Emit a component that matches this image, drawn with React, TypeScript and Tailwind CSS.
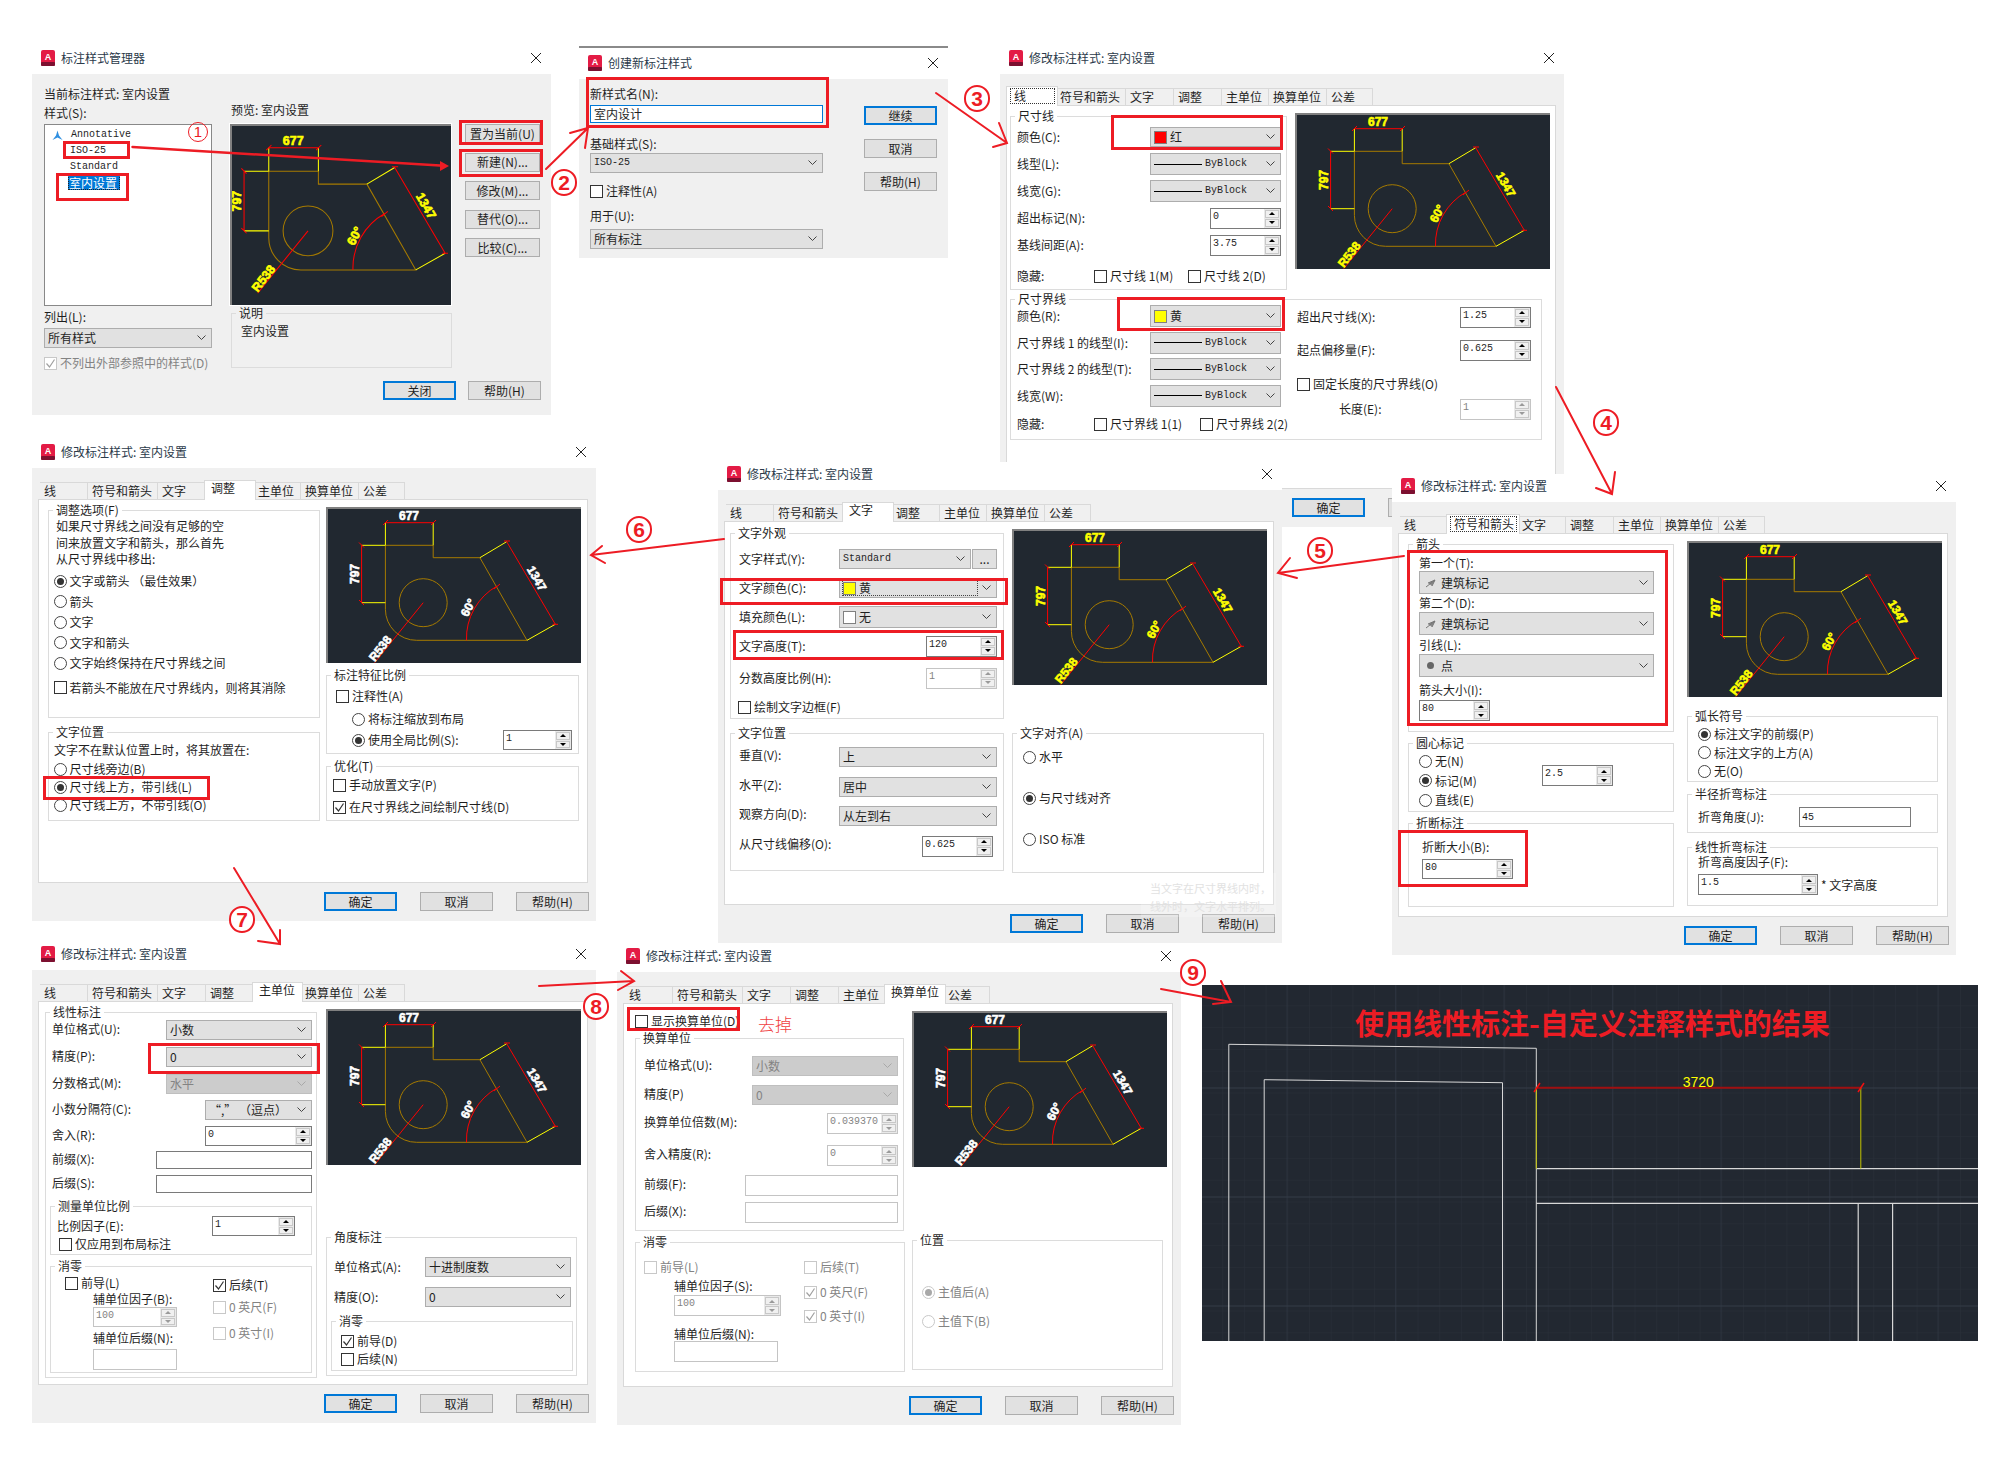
import { ReactNode } from "react";
import clsx from "clsx";

const TABS = [
  { name: "线", w: "w-[48px]", on: "w-[52px]" },
  { name: "符号和箭头", w: "w-[70px]", on: "w-[74px]" },
  { name: "文字", w: "w-[48px]", on: "w-[52px]" },
  { name: "调整", w: "w-[48px]", on: "w-[52px]" },
  { name: "主单位", w: "w-[47px]", on: "w-[51px]" },
  { name: "换算单位", w: "w-[58px]", on: "w-[62px]" },
  { name: "公差", w: "w-[46px]", on: "w-[50px]" },
];

const mono = "[font-family:'Liberation_Mono','Noto_Sans_CJK_SC',monospace] text-[10px]";

function Chevron({ disabled }: { disabled?: boolean }) {
  return (
    <svg width="9" height="6" viewBox="0 0 9 6" className="shrink-0">
      <polyline points="0.5,0.5 4.5,4.5 8.5,0.5" fill="none" stroke={disabled ? "#a8a8a8" : "#444"} strokeWidth="1" />
    </svg>
  );
}

function Combo({ className, disabled, children }: { className?: string; disabled?: boolean; children?: ReactNode }) {
  return (
    <div
      className={clsx(
        "flex items-center pl-[3px] pr-[5px] border shrink-0",
        disabled ? "bg-[#cccccc] border-[#bfbfbf] text-[#838383]" : "bg-[#e1e1e1] border-[#adadad]",
        className
      )}
    >
      <div className="flex-1 flex items-center gap-[3px] min-w-0">{children}</div>
      <Chevron disabled={disabled} />
    </div>
  );
}

function ByBlock() {
  return (
    <>
      <span className="w-[48px] h-px bg-black" />
      <span className={mono}>ByBlock</span>
    </>
  );
}

function Swatch({ color }: { color: string }) {
  return <span className={clsx("w-[13px] h-[13px] border border-[#808080]", color)} />;
}

function Spin({ className, value, disabled }: { className?: string; value: string; disabled?: boolean }) {
  const arrow = disabled ? "#9a9a9a" : "#000";
  return (
    <div className={clsx("flex border shrink-0 bg-white", disabled ? "border-[#c4c4c4] text-[#838383]" : "border-[#7a7a7a]", className)}>
      <span className={clsx(mono, "flex-1 pl-[2px] pt-[1px] whitespace-nowrap")}>{value}</span>
      <div className="w-[16px] flex flex-col gap-[1px] p-[1px] bg-[#e9e9e9]">
        <span className="flex-1 flex items-center justify-center bg-[#f0f0f0] border border-[#c8c8c8]">
          <svg width="6" height="3" viewBox="0 0 6 3"><polygon points="3,0 6,3 0,3" fill={arrow} /></svg>
        </span>
        <span className="flex-1 flex items-center justify-center bg-[#f0f0f0] border border-[#c8c8c8]">
          <svg width="6" height="3" viewBox="0 0 6 3"><polygon points="0,0 6,0 3,3" fill={arrow} /></svg>
        </span>
      </div>
    </div>
  );
}

function Input({ className, value, disabled }: { className?: string; value?: string; disabled?: boolean }) {
  return (
    <div className={clsx("border bg-white pl-[2px] shrink-0", disabled ? "border-[#c4c4c4]" : "border-[#7a7a7a]", className)}>
      <span className={mono}>{value}</span>
    </div>
  );
}

function Check({ label, on, disabled, className }: { label: string; on?: boolean; disabled?: boolean; className?: string }) {
  return (
    <div className={clsx("flex items-center gap-[3px] h-[14px] whitespace-nowrap shrink-0", disabled && "text-[#838383]", className)}>
      <span className={clsx("w-[13px] h-[13px] border bg-white flex items-center justify-center shrink-0", disabled ? "border-[#c8c8c8]" : "border-[#333333]")}>
        {on && (
          <svg width="11" height="11" viewBox="0 0 11 11">
            <polyline points="1.5,5.5 4.5,9 9.5,1.5" fill="none" stroke={disabled ? "#a0a0a0" : "#333"} strokeWidth="1.2" />
          </svg>
        )}
      </span>
      {label}
    </div>
  );
}

function Radio({ label, on, disabled, className }: { label: string; on?: boolean; disabled?: boolean; className?: string }) {
  return (
    <div className={clsx("flex items-center gap-[3px] h-[14px] whitespace-nowrap", disabled && "text-[#838383]", className)}>
      <span className={clsx("w-[13px] h-[13px] rounded-full border bg-white flex items-center justify-center shrink-0", disabled ? "border-[#c8c8c8]" : "border-[#444444]")}>
        {on && <span className={clsx("w-[7px] h-[7px] rounded-full", disabled ? "bg-[#a8a8a8]" : "bg-[#333333]")} />}
      </span>
      {label}
    </div>
  );
}

function Btn({ children, primary, className }: { children: ReactNode; primary?: boolean; className?: string }) {
  return (
    <div
      className={clsx(
        "h-[19px] bg-[#e1e1e1] flex items-center justify-center shrink-0",
        primary ? "border-2 border-[#0078d7]" : "border border-[#adadad]",
        className
      )}
    >
      {children}
    </div>
  );
}

function Group({ legend, className, children }: { legend: string; className?: string; children?: ReactNode }) {
  return (
    <fieldset className={clsx("border border-[#dcdcdc] min-w-0 shrink-0", className)}>
      <legend className="ml-[4px] px-[3px] text-[12px] leading-[14px]">{legend}</legend>
      {children}
    </fieldset>
  );
}

function Field({ label, className, children }: { label: string; className?: string; children?: ReactNode }) {
  return (
    <div className={clsx("flex items-center justify-between whitespace-nowrap", className)}>
      <span>{label}</span>
      {children}
    </div>
  );
}

function Preview({ white, big, className }: { white?: boolean; big?: boolean; className?: string }) {
  const ink = white ? "#ffffff" : "#ffff00";
  const brown = "#a57a00";
  return (
    <div className={clsx("shrink-0 bg-[#212830] border-t-2 border-l-2 border-[#808080] outline outline-1 outline-white", big ? "w-[221px] h-[181px]" : "w-[255px] h-[156px]", className)}>
      <svg className="w-full h-full" viewBox={big ? "22.2 -7.3 210.5 172.4" : "0 0 253 154"} fontFamily="Liberation Sans, sans-serif" fontWeight="bold" fontSize="12">
        <g fill="none" stroke={brown} strokeWidth="1">
          <path d="M57.4 36.3H105.2V48.7H151.9L199 131.3H88.7A31 31 0 0 1 57.4 100.3Z" />
          <circle cx="95.2" cy="93.7" r="24" />
        </g>
        <g fill="none" stroke="#ffff00" strokeWidth="1">
          <path d="M57.4 13.7V36.3M105.2 13.7V36.3M33.6 36.3H57.4M33.6 93.7H57.4M151.9 48.7L178.7 32.7M199 131.3L227.3 115.3" />
        </g>
        <g fill="none" stroke="#ff0000" strokeWidth="1">
          <path d="M55 16L60 11M103 16L108 11M57.4 13.7H105.2" />
          <path d="M33.6 36.3V93.7M31 33.5L36 38.5M31 91L36 96" />
          <path d="M178.7 32.7L227.3 115.3M176 32H182M224.5 115.3H230" />
          <path d="M95.2 93.7L46.7 153.7" />
          <path d="M169.1 77A60 60 0 0 0 138.5 131.3M166 80L172 75" />
        </g>
        <g fill={ink} stroke={ink} strokeWidth="0.6" textAnchor="middle">
          <text x="81" y="11">677</text>
          <text x="27.5" y="65" transform="rotate(-90 27.5 65)" dominantBaseline="middle">797</text>
          <text x="208" y="70" transform="rotate(60 208 70)" dominantBaseline="middle">1347</text>
          <text x="141" y="99" transform="rotate(-62 141 99)" dominantBaseline="middle">60°</text>
          <text x="53" y="140" transform="rotate(-52 53 140)" dominantBaseline="middle">R538</text>
        </g>
      </svg>
    </div>
  );
}

function TitleBar({ title, className }: { title: string; className?: string }) {
  return (
    <div className={clsx("flex items-center justify-between pl-[9px] pr-[9px] pb-[4px]", className)}>
      <div className="flex items-center gap-[6px]">
        <svg width="14" height="16" viewBox="0 0 14 16">
          <rect width="14" height="16" rx="2" fill="#e31b45" />
          <rect y="12" width="14" height="4" rx="1" fill="#7c1030" />
          <text x="7" y="10" textAnchor="middle" fontSize="9" fontWeight="bold" fill="#fff" fontFamily="Liberation Sans, sans-serif">A</text>
        </svg>
        <span className="text-[#2b3a4a]">{title}</span>
      </div>
      <svg width="12" height="12" viewBox="0 0 12 12">
        <path d="M1 1L11 11M11 1L1 11" stroke="#222" strokeWidth="1" />
      </svg>
    </div>
  );
}

function TabWin({ className, active, focus, panelClass, children }: { className: string; active: string; focus?: boolean; panelClass?: string; children: ReactNode }) {
  return (
    <section className={clsx("absolute w-[564px] bg-white", className)}>
      <TitleBar title="修改标注样式: 室内设置" className="h-[28px]" />
      <div className="h-[453px] bg-[#f0f0f0] pt-[14px] pl-[6px]">
        <div className="flex pl-[2px] h-[17px]">
          {TABS.map((t) => (
            <div
              key={t.name}
              className={clsx(
                "shrink-0 border-t border-r border-[#d9d9d9] pl-[4px] whitespace-nowrap",
                t.name === active
                  ? clsx(t.on, "relative z-10 -mx-[2px] -mt-[2px] h-[20px] bg-white border-l pl-[6px]")
                  : clsx(t.w, "bg-[#f0f0f0] leading-[16px]")
              )}
            >
              {t.name === active && focus ? (
                <span className="block border border-dotted border-[#333333] leading-[14px] mt-[1px] -ml-[3px] mr-[2px] pl-[3px]">{t.name}</span>
              ) : (
                t.name
              )}
            </div>
          ))}
        </div>
        <div className={clsx("w-[550px] h-[384px] bg-white border border-[#d9d9d9]", panelClass)}>{children}</div>
        <div className="flex justify-end gap-[23px] pr-[7px] mt-[9px]">
          <Btn primary className="w-[73px]">确定</Btn>
          <Btn className="w-[73px]">取消</Btn>
          <Btn className="w-[73px]">帮助(H)</Btn>
        </div>
      </div>
    </section>
  );
}

function ManagerWin() {
  return (
    <section className="absolute left-[32px] top-[46px] w-[519px] bg-white">
      <TitleBar title="标注样式管理器" className="h-[28px]" />
      <div className="h-[341px] bg-[#f0f0f0] flex flex-col">
        <div className="flex pl-[12px] h-[296px]">
          <div className="w-[168px] pt-[13px]">
            <div className="h-[14px] whitespace-nowrap">当前标注样式: 室内设置</div>
            <div className="h-[14px] mt-[5px]">样式(S):</div>
            <div className="h-[182px] mt-[4px] bg-white border border-[#888888] pt-[2px]">
              <div className="h-[16px] flex items-center gap-[8px] pl-[7px]">
                <svg width="11" height="11" viewBox="0 0 11 11">
                  <path d="M5.5 0.5L7 5.5L10.5 10L5.5 7.5L0.5 10L4 5.5Z" fill="#2f8fe0" />
                </svg>
                <span className={mono}>Annotative</span>
              </div>
              <div className={clsx(mono, "h-[16px] leading-[16px] pl-[25px]")}>ISO-25</div>
              <div className={clsx(mono, "h-[16px] leading-[16px] pl-[25px]")}>Standard</div>
              <div className="ml-[23px] -mt-[1px] w-[52px] h-[16px] leading-[15px] bg-[#0078d7] text-white border border-dotted border-[#222222] whitespace-nowrap">室内设置</div>
            </div>
            <div className="h-[14px] mt-[4px]">列出(L):</div>
            <Combo className="w-[168px] h-[20px] mt-[4px]">所有样式</Combo>
            <Check disabled on label="不列出外部参照中的样式(D)" className="mt-[8px]" />
          </div>
          <div className="w-[221px] ml-[19px] pt-[29px]">
            <div className="h-[14px]">预览: 室内设置</div>
            <Preview big white={false} className="mt-[7px] -ml-[1px]" />
            <Group legend="说明" className="w-[221px] h-[62px] mt-[1px]">
              <div className="pl-[9px] pt-[4px]">室内设置</div>
            </Group>
          </div>
          <div className="w-[75px] ml-[13px] pt-[50px] flex flex-col gap-[9.5px]">
            <Btn>置为当前(U)</Btn>
            <Btn>新建(N)...</Btn>
            <Btn>修改(M)...</Btn>
            <Btn>替代(O)...</Btn>
            <Btn>比较(C)...</Btn>
          </div>
        </div>
        <div className="flex justify-end gap-[12px] pr-[10px] mt-[11px]">
          <Btn primary className="w-[73px]">关闭</Btn>
          <Btn className="w-[73px]">帮助(H)</Btn>
        </div>
      </div>
    </section>
  );
}

function CreateWin() {
  return (
    <section className="absolute left-[579px] top-[46px] w-[369px] bg-white border-t-2 border-[#8a8a8a]">
      <TitleBar title="创建新标注样式" className="h-[31px] pt-[3px]" />
      <div className="h-[179px] bg-[#f0f0f0] flex pl-[11px]">
        <div className="w-[233px] pt-[8px]">
          <div className="h-[14px]">新样式名(N):</div>
          <div className="h-[18px] mt-[4px] bg-white border border-[#0078d7] pl-[3px] leading-[16px]">室内设计</div>
          <div className="h-[14px] mt-[14px]">基础样式(S):</div>
          <Combo className="w-[233px] h-[20px] mt-[2px]"><span className={mono}>ISO-25</span></Combo>
          <Check label="注释性(A)" className="mt-[11px]" />
          <div className="h-[14px] mt-[11px]">用于(U):</div>
          <Combo className="w-[233px] h-[20px] mt-[6px]">所有标注</Combo>
        </div>
        <div className="ml-[41px] pt-[27px] flex flex-col gap-[14px]">
          <Btn primary className="w-[73px]">继续</Btn>
          <Btn className="w-[73px]">取消</Btn>
          <Btn className="w-[73px]">帮助(H)</Btn>
        </div>
      </div>
    </section>
  );
}

function LinesWin() {
  return (
    <TabWin className="left-[1000px] top-[46px]" active="线" focus panelClass="pl-[3px] pt-[3px]">
      <div className="flex gap-[8px]">
        <Group legend="尺寸线" className="w-[277px] h-[181px]">
          <div className="flex flex-col gap-[5px] pl-[6px] pr-[5px] pt-[3px]">
            <Field label="颜色(C):" className="h-[22px]">
              <Combo className="w-[131px] h-[20px]"><Swatch color="bg-[#ff0000]" />红</Combo>
            </Field>
            <Field label="线型(L):" className="h-[22px]"><Combo className="w-[131px] h-[22px]"><ByBlock /></Combo></Field>
            <Field label="线宽(G):" className="h-[22px]"><Combo className="w-[131px] h-[22px]"><ByBlock /></Combo></Field>
            <Field label="超出标记(N):" className="h-[22px]"><Spin className="w-[71px] h-[21px]" value="0" /></Field>
            <Field label="基线间距(A):" className="h-[22px]"><Spin className="w-[71px] h-[21px]" value="3.75" /></Field>
            <div className="flex items-center h-[22px] mt-[4px]">
              <span className="w-[77px] shrink-0">隐藏:</span>
              <Check label="尺寸线 1(M)" className="w-[94px]" />
              <Check label="尺寸线 2(D)" />
            </div>
          </div>
        </Group>
        <Preview className="mt-[4px]" />
      </div>
      <Group legend="尺寸界线" className="w-[532px] h-[148px] mt-[2px]">
        <div className="flex pl-[6px] -mt-[1px]">
          <div className="w-[264px] flex flex-col gap-[4.5px]">
            <Field label="颜色(R):" className="h-[22px]">
              <Combo className="w-[131px] h-[22px]"><Swatch color="bg-[#ffff00]" />黄</Combo>
            </Field>
            <Field label="尺寸界线 1 的线型(I):" className="h-[22px]"><Combo className="w-[131px] h-[22px]"><ByBlock /></Combo></Field>
            <Field label="尺寸界线 2 的线型(T):" className="h-[22px]"><Combo className="w-[131px] h-[22px]"><ByBlock /></Combo></Field>
            <Field label="线宽(W):" className="h-[22px]"><Combo className="w-[131px] h-[22px]"><ByBlock /></Combo></Field>
            <div className="flex items-center h-[22px] mt-[2px]">
              <span className="w-[77px] shrink-0">隐藏:</span>
              <Check label="尺寸界线 1(1)" className="w-[106px]" />
              <Check label="尺寸界线 2(2)" />
            </div>
          </div>
          <div className="w-[234px] ml-[16px] pt-[1px]">
            <Field label="超出尺寸线(X):" className="h-[22px]"><Spin className="w-[71px] h-[21px]" value="1.25" /></Field>
            <Field label="起点偏移量(F):" className="h-[22px] mt-[11px]"><Spin className="w-[71px] h-[21px]" value="0.625" /></Field>
            <Check label="固定长度的尺寸界线(O)" className="mt-[16px]" />
            <Field label="长度(E):" className="h-[22px] mt-[7px] pl-[42px]"><Spin disabled className="w-[71px] h-[21px]" value="1" /></Field>
          </div>
        </div>
      </Group>
    </TabWin>
  );
}

function FitWin() {
  return (
    <TabWin className="left-[32px] top-[440px]" active="调整" panelClass="flex pl-[9px] pt-[3px] gap-[6px]">
      <div className="w-[272px] flex flex-col gap-[7px]">
        <Group legend="调整选项(F)" className="h-[215px]">
          <div className="pl-[7px] pt-[1px] leading-[16.5px]">
            如果尺寸界线之间没有足够的空<br />间来放置文字和箭头，那么首先<br />从尺寸界线中移出:
          </div>
          <div className="pl-[4.5px] pt-[6.5px] flex flex-col gap-[6.5px]">
            <Radio on label="文字或箭头 （最佳效果）" />
            <Radio label="箭头" />
            <Radio label="文字" />
            <Radio label="文字和箭头" />
            <Radio label="文字始终保持在尺寸界线之间" />
            <Check label="若箭头不能放在尺寸界线内，则将其消除" className="mt-[4px]" />
          </div>
        </Group>
        <Group legend="文字位置" className="h-[96px]">
          <div className="pl-[5px] pt-[4px]">文字不在默认位置上时，将其放置在:</div>
          <div className="pl-[4.5px] pt-[5px] flex flex-col gap-[4px]">
            <Radio label="尺寸线旁边(B)" />
            <Radio on label="尺寸线上方，带引线(L)" />
            <Radio label="尺寸线上方，不带引线(O)" />
          </div>
        </Group>
      </div>
      <div className="w-[255px] pt-[4px]">
        <Preview white />
        <Group legend="标注特征比例" className="w-[253px] h-[86px] mt-[5px]">
          <div className="pl-[9px] pt-[7px]"><Check label="注释性(A)" /></div>
          <div className="pl-[25px] pt-[9px]"><Radio label="将标注缩放到布局" /></div>
          <div className="pl-[25px] pr-[6px] pt-[4px] flex items-center justify-between h-[24px]">
            <Radio on label="使用全局比例(S):" />
            <Spin className="w-[69px] h-[20px]" value="1" />
          </div>
        </Group>
        <Group legend="优化(T)" className="w-[253px] h-[62px] mt-[5px]">
          <div className="pl-[6px] pt-[5px] flex flex-col gap-[8px]">
            <Check label="手动放置文字(P)" />
            <Check on label="在尺寸界线之间绘制尺寸线(D)" />
          </div>
        </Group>
      </div>
    </TabWin>
  );
}

function TextWin() {
  return (
    <TabWin className="left-[718px] top-[462px]" active="文字" panelClass="flex pl-[5px] pt-[4px] gap-[8px]">
      <div className="w-[274px] flex flex-col gap-[7px]">
        <Group legend="文字外观" className="h-[193px]">
          <div className="pl-[8px] pr-[6px] pt-[8px]">
            <Field label="文字样式(Y):" className="h-[22px]">
              <div className="flex gap-[1px]">
                <Combo className="w-[132px] h-[20px]"><span className={mono}>Standard</span></Combo>
                <Btn className="w-[25px] h-[20px]">...</Btn>
              </div>
            </Field>
            <Field label="文字颜色(C):" className="h-[22px] mt-[7px]">
              <Combo className="w-[158px] h-[20px]">
                <span className="flex-1 flex items-center gap-[3px] border border-dotted border-[#444444] h-[16px] -ml-[1px] mr-[4px]"><Swatch color="bg-[#ffff00]" />黄</span>
              </Combo>
            </Field>
            <Field label="填充颜色(L):" className="h-[22px] mt-[7px]">
              <Combo className="w-[158px] h-[22px]"><Swatch color="bg-white" />无</Combo>
            </Field>
            <Field label="文字高度(T):" className="h-[22px] mt-[7px]"><Spin className="w-[71px] h-[21px]" value="120" /></Field>
            <Field label="分数高度比例(H):" className="h-[22px] mt-[10px]"><Spin disabled className="w-[71px] h-[21px]" value="1" /></Field>
            <Check label="绘制文字边框(F)" className="mt-[11px] -ml-[1px]" />
          </div>
        </Group>
        <Group legend="文字位置" className="h-[145px]">
          <div className="pl-[8px] pr-[6px] pt-[6px] [&>div>span:first-child]:-mt-[5px]">
            <Field label="垂直(V):" className="h-[22px]"><Combo className="w-[158px] h-[20px]">上</Combo></Field>
            <Field label="水平(Z):" className="h-[22px] mt-[8px]"><Combo className="w-[158px] h-[20px]">居中</Combo></Field>
            <Field label="观察方向(D):" className="h-[22px] mt-[7px]"><Combo className="w-[158px] h-[20px]">从左到右</Combo></Field>
            <Field label="从尺寸线偏移(O):" className="h-[22px] mt-[8px] pr-[4px]"><Spin className="w-[71px] h-[21px]" value="0.625" /></Field>
          </div>
        </Group>
      </div>
      <div className="w-[255px] pt-[3px]">
        <Preview />
        <Group legend="文字对齐(A)" className="w-[252px] h-[147px] mt-[41px]">
          <div className="pl-[10px] pt-[10px] flex flex-col gap-[27px]">
            <Radio label="水平" />
            <Radio on label="与尺寸线对齐" />
            <Radio label="ISO 标准" />
          </div>
        </Group>
      </div>
    </TabWin>
  );
}

function ArrowsWin() {
  const tick = (
    <svg width="11" height="11" viewBox="0 0 11 11"><path d="M1 10L10 3M3 6L10 3L7 9" fill="#8a8a8a" stroke="#777" /></svg>
  );
  return (
    <TabWin className="left-[1392px] top-[474px]" active="符号和箭头" focus panelClass="flex pl-[9px] pt-[3px] gap-[13px]">
      <div className="w-[266px] flex flex-col gap-[4px]">
        <Group legend="箭头" className="h-[195px]">
          <div className="pl-[10px]">
            <div className="h-[14px] mt-[5px]">第一个(T):</div>
            <Combo className="w-[235px] h-[23px] mt-[1px] pl-[5px]">{tick}<span className="ml-[2px]">建筑标记</span></Combo>
            <div className="h-[14px] mt-[2px]">第二个(D):</div>
            <Combo className="w-[235px] h-[23px] mt-[2px] pl-[5px]">{tick}<span className="ml-[2px]">建筑标记</span></Combo>
            <div className="h-[14px] mt-[3px]">引线(L):</div>
            <Combo className="w-[235px] h-[23px] mt-[2px] pl-[5px]">
              <span className="w-[11px] flex items-center"><span className="w-[7px] h-[7px] rounded-full bg-[#666666] ml-[2px]" /></span>
              <span className="ml-[2px]">点</span>
            </Combo>
            <div className="h-[14px] mt-[6px]">箭头大小(I):</div>
            <Spin className="w-[71px] h-[21px] mt-[3px]" value="80" />
          </div>
        </Group>
        <Group legend="圆心标记" className="h-[76px]">
          <div className="flex pl-[10px]">
            <div className="w-[123px] flex flex-col pt-[4px] gap-[5.5px]">
              <Radio label="无(N)" />
              <Radio on label="标记(M)" />
              <Radio label="直线(E)" />
            </div>
            <Spin className="w-[71px] h-[21px] mt-[15px]" value="2.5" />
          </div>
        </Group>
        <Group legend="折断标注" className="h-[91px]">
          <div className="pl-[13px]">
            <div className="h-[14px] mt-[10px]">折断大小(B):</div>
            <Spin className="w-[91px] h-[20px] mt-[5px]" value="80" />
          </div>
        </Group>
      </div>
      <div className="w-[255px] pt-[4px]">
        <Preview />
        <Group legend="弧长符号" className="w-[251px] h-[73px] mt-[12px]">
          <div className="pl-[10px] pt-[4px] flex flex-col gap-[4.5px]">
            <Radio on label="标注文字的前缀(P)" />
            <Radio label="标注文字的上方(A)" />
            <Radio label="无(O)" />
          </div>
        </Group>
        <Group legend="半径折弯标注" className="w-[251px] h-[46px] mt-[5px]">
          <div className="flex items-center pl-[10px] pt-[6px]">
            <span className="w-[101px]">折弯角度(J):</span>
            <Input className="w-[112px] h-[20px]" value="45" />
          </div>
        </Group>
        <Group legend="线性折弯标注" className="w-[251px] h-[66px] mt-[7px]">
          <div className="pl-[10px]">
            <div className="h-[14px] mt-[1px]">折弯高度因子(F):</div>
            <div className="flex items-center gap-[3px] mt-[5px] whitespace-nowrap">
              <Spin className="w-[120px] h-[21px]" value="1.5" />
              * 文字高度
            </div>
          </div>
        </Group>
      </div>
    </TabWin>
  );
}

function PrimaryWin() {
  return (
    <TabWin className="left-[32px] top-[942px]" active="主单位" panelClass="flex pl-[6px] pt-[3px] gap-[9px]">
      <Group legend="线性标注" className="w-[272px] h-[373px]">
        <div className="pl-[4px] pr-[4px]">
          <div className="pl-[2px] pt-[1px] [&>div>span:first-child]:-mt-[3px]">
            <Field label="单位格式(U):" className="h-[20px]"><Combo className="w-[146px] h-[20px]">小数</Combo></Field>
            <Field label="精度(P):" className="h-[20px] mt-[7px]"><Combo className="w-[146px] h-[20px]">0</Combo></Field>
            <Field label="分数格式(M):" className="h-[20px] mt-[7px]"><Combo disabled className="w-[146px] h-[20px]">水平</Combo></Field>
            <Field label="小数分隔符(C):" className="h-[20px] mt-[6px]"><Combo className="w-[107px] h-[20px]">“,” （逗点）</Combo></Field>
            <Field label="舍入(R):" className="h-[20px] mt-[6px]"><Spin className="w-[107px] h-[20px]" value="0" /></Field>
            <Field label="前缀(X):" className="h-[18px] mt-[5px]"><Input className="w-[156px] h-[18px]" /></Field>
            <Field label="后缀(S):" className="h-[18px] mt-[6px]"><Input className="w-[156px] h-[18px]" /></Field>
          </div>
          <Group legend="测量单位比例" className="w-[262px] h-[56px] mt-[6px]">
            <div className="pl-[6px] pr-[16px] pt-[3px]">
              <Field label="比例因子(E):" className="h-[20px]"><Spin className="w-[83px] h-[20px]" value="1" /></Field>
              <Check label="仅应用到布局标注" className="mt-[1px] ml-[2px]" />
            </div>
          </Group>
          <Group legend="消零" className="w-[262px] h-[114px] mt-[4px]">
            <div className="flex pl-[14px]">
              <div className="w-[148px] pt-[3px]">
                <Check label="前导(L)" />
                <div className="pl-[28px]">
                  <div className="h-[14px] mt-[2px] whitespace-nowrap">辅单位因子(B):</div>
                  <Spin disabled className="w-[84px] h-[20px] mt-[1px]" value="100" />
                  <div className="h-[14px] mt-[4px] whitespace-nowrap">辅单位后缀(N):</div>
                  <Input disabled className="w-[84px] h-[21px] mt-[4px]" />
                </div>
              </div>
              <div className="pt-[5px]">
                <Check on label="后续(T)" />
                <Check disabled label="0 英尺(F)" className="mt-[8px]" />
                <Check disabled label="0 英寸(I)" className="mt-[12px]" />
              </div>
            </div>
          </Group>
        </div>
      </Group>
      <div className="w-[255px] pt-[4px]">
        <Preview white />
        <Group legend="角度标注" className="w-[251px] h-[146px] mt-[65px]">
          <div className="pl-[7px] pr-[5px] pt-[13px]">
            <Field label="单位格式(A):" className="h-[20px]"><Combo className="w-[146px] h-[20px]">十进制度数</Combo></Field>
            <Field label="精度(O):" className="h-[20px] mt-[10px]"><Combo className="w-[146px] h-[20px]">0</Combo></Field>
          </div>
          <Group legend="消零" className="w-[242px] h-[57px] ml-[4px] mt-[7px]">
            <div className="pl-[9px] pt-[6px] flex flex-col gap-[4px]">
              <Check on label="前导(D)" />
              <Check label="后续(N)" />
            </div>
          </Group>
        </Group>
      </div>
    </TabWin>
  );
}

function AltWin() {
  return (
    <TabWin className="left-[617px] top-[944px]" active="换算单位" panelClass="flex pl-[11px] gap-[7px]">
      <div className="w-[270px] pt-[10px]">
        <Check label="显示换算单位(D)" />
        <Group legend="换算单位" className="w-[269px] h-[200px] mt-[3px]">
          <div className="pl-[8px] pr-[5px] pt-[11px] [&>div>span:first-child]:-mt-[3px]">
            <Field label="单位格式(U):" className="h-[20px]"><Combo disabled className="w-[146px] h-[20px]">小数</Combo></Field>
            <Field label="精度(P)" className="h-[20px] mt-[9px]"><Combo disabled className="w-[146px] h-[20px]">0</Combo></Field>
            <Field label="换算单位倍数(M):" className="h-[21px] mt-[8px]"><Spin disabled className="w-[71px] h-[21px]" value="0.039370" /></Field>
            <Field label="舍入精度(R):" className="h-[21px] mt-[11px]"><Spin disabled className="w-[71px] h-[21px]" value="0" /></Field>
            <Field label="前缀(F):" className="h-[21px] mt-[9px]"><Input disabled className="w-[153px] h-[21px]" /></Field>
            <Field label="后缀(X):" className="h-[21px] mt-[6px]"><Input disabled className="w-[153px] h-[21px]" /></Field>
          </div>
        </Group>
        <Group legend="消零" className="w-[270px] h-[137px] mt-[4px]">
          <div className="flex pl-[8px]">
            <div className="w-[160px] pt-[11px]">
              <Check disabled label="前导(L)" />
              <div className="pl-[30px]">
                <div className="h-[14px] mt-[5px] whitespace-nowrap">辅单位因子(S):</div>
                <Spin disabled className="w-[107px] h-[21px] mt-[2px]" value="100" />
                <div className="h-[14px] mt-[11px] whitespace-nowrap">辅单位后缀(N):</div>
                <Input disabled className="w-[104px] h-[21px]" />
              </div>
            </div>
            <div className="pt-[11px]">
              <Check disabled label="后续(T)" />
              <Check disabled on label="0 英尺(F)" className="mt-[11px]" />
              <Check disabled on label="0 英寸(I)" className="mt-[10px]" />
            </div>
          </div>
        </Group>
      </div>
      <div className="w-[255px] pt-[7px]">
        <Preview white />
        <Group legend="位置" className="w-[251px] h-[137px] mt-[66px]">
          <div className="pl-[9px] pt-[38px] flex flex-col gap-[15px]">
            <Radio disabled on label="主值后(A)" />
            <Radio disabled label="主值下(B)" />
          </div>
        </Group>
      </div>
    </TabWin>
  );
}

function ResultCanvas() {
  return (
    <section className="absolute left-[1202px] top-[985px] w-[776px] h-[356px] bg-[#222831] overflow-hidden">
      <svg width="776" height="356" viewBox="0 0 776 356" className="block">
        <defs>
          <pattern id="minor" x="-0.5" y="-0.5" width="21.7" height="21.8" patternUnits="userSpaceOnUse">
            <path d="M21.7 0V21.8M0 21.8H21.7" fill="none" stroke="#2a303a" strokeWidth="1" />
          </pattern>
          <pattern id="major" x="-23" y="-6" width="108.5" height="109" patternUnits="userSpaceOnUse">
            <path d="M108.5 0V109M0 109H108.5" fill="none" stroke="#333b48" strokeWidth="1" />
          </pattern>
        </defs>
        <rect width="776" height="356" fill="url(#minor)" />
        <rect width="776" height="356" fill="url(#major)" />
        <g fill="none" stroke="#d8d8d8" strokeWidth="1">
          <path d="M26.8 356V59.3L334.3 63.3V356" />
          <path d="M62.2 356V94.7L300.5 97.7V356" />
          <path d="M334.3 183.7H776M334.3 218.3H776M656.2 218.3V356M690.6 218.3V356" strokeWidth="1.2" />
        </g>
        <path d="M334.3 102.7V183.7M658.8 102.7V183.7" stroke="#c4c400" strokeWidth="1" />
        <path d="M334.3 102.7H658.8" stroke="#a00f10" strokeWidth="2" />
        <path d="M332 107L338 98M656 107L662 98" stroke="#f01010" strokeWidth="1.5" />
        <text x="496.3" y="102" textAnchor="middle" fontSize="14" fontFamily="Liberation Sans, sans-serif" fill="#ffff00">3720</text>
      </svg>
      <div className="absolute left-[153px] top-[20px] text-[29px] leading-[34px] font-bold text-[#ed1c24] whitespace-nowrap">使用线性标注-自定义注释样式的结果</div>
    </section>
  );
}

function Badge({ n, className }: { n: string; className: string }) {
  return (
    <div className={clsx("absolute w-[26px] h-[27px] rounded-full border-2 border-[#ed1c24] bg-white text-[#ed1c24] text-[21px] leading-[23px] font-bold text-center [font-family:'Liberation_Sans',sans-serif]", className)}>
      {n}
    </div>
  );
}

const box = "absolute border-[3px] border-[#ed1c24]";

export default function App() {
  return (
    <div className="relative w-[2000px] h-[1466px] bg-white overflow-hidden text-[12px] leading-[14px] text-[#1f1f1f] [font-family:'Noto_Sans_CJK_SC',sans-serif]">
      <ManagerWin />
      <CreateWin />
      <LinesWin />
      <FitWin />
      <TextWin />
      <ArrowsWin />
      <PrimaryWin />
      <AltWin />
      <ResultCanvas />

      {/* faded tooltip left in the capture */}
      <div className="absolute left-[1141px] top-[873px] w-[135px] h-[44px] bg-white/20 pl-[9px] pt-[6px] text-[11px] leading-[18px] text-[#e2e2e2] whitespace-nowrap">
        当文字在尺寸界线内时，<br />线外时，文字水平排列。
      </div>

      {/* red boxes */}
      <div className={clsx(box, "left-[63px] top-[141px] w-[67px] h-[18px]")} />
      <div className={clsx(box, "left-[56px] top-[173px] w-[73px] h-[28px]")} />
      <div className={clsx(box, "left-[459px] top-[120px] w-[84px] h-[25px]")} />
      <div className={clsx(box, "left-[459px] top-[149px] w-[84px] h-[28px]")} />
      <div className={clsx(box, "left-[586px] top-[77px] w-[243px] h-[51px]")} />
      <div className={clsx(box, "left-[1111px] top-[115px] w-[172px] h-[35px]")} />
      <div className={clsx(box, "left-[1117px] top-[297px] w-[168px] h-[34px]")} />
      <div className={clsx(box, "left-[43px] top-[776px] w-[167px] h-[24px]")} />
      <div className={clsx(box, "left-[720px] top-[578px] w-[288px] h-[27px]")} />
      <div className={clsx(box, "left-[733px] top-[630px] w-[271px] h-[30px]")} />
      <div className={clsx(box, "left-[1407px] top-[550px] w-[261px] h-[176px]")} />
      <div className={clsx(box, "left-[1398px] top-[830px] w-[130px] h-[57px]")} />
      <div className={clsx(box, "left-[148px] top-[1043px] w-[172px] h-[31px]")} />
      <div className={clsx(box, "left-[627px] top-[1007px] w-[113px] h-[24px]")} />

      {/* arrows between the steps */}
      <svg className="absolute left-0 top-0 pointer-events-none" width="2000" height="1466" viewBox="0 0 2000 1466">
        <g fill="none" stroke="#ed1c24" strokeWidth="2" strokeLinecap="round">
          <path d="M132.5 147L440 165.5" strokeWidth="2.5" />
          <path d="M546 169L588 128M570 133L588 128L585 148" />
          <path d="M936 93L1007 143M999 123L1007 143L993 147" />
          <path d="M1556 387L1612 494M1615 472L1612 494L1596 488" />
          <path d="M1404 556L1278 573M1290 558L1278 573L1297 578" />
          <path d="M724 539L591 555M602 546L591 555L605 563" />
          <path d="M234 868L280 944M280 930L280 944L258 941" />
          <path d="M539 986L634 981M621 971L634 981L618 990" />
          <path d="M1161 989L1231 1002M1221 981L1231 1002L1213 1004" />
        </g>
        <polygon points="449,166 440,161 440,171" fill="#ed1c24" />
      </svg>

      {/* step numbers */}
      <div className="absolute left-[188px] top-[122px] w-[20px] h-[20px] rounded-full border border-[#ed1c24] text-[#ed1c24] text-[15px] leading-[18px] text-center [font-family:'Liberation_Sans',sans-serif]">1</div>
      <Badge n="2" className="left-[551px] top-[169px]" />
      <Badge n="3" className="left-[964px] top-[85px]" />
      <Badge n="4" className="left-[1593px] top-[409px]" />
      <Badge n="5" className="left-[1307px] top-[537px]" />
      <Badge n="6" className="left-[626px] top-[516px]" />
      <Badge n="7" className="left-[229px] top-[906px]" />
      <Badge n="8" className="left-[583px] top-[993px]" />
      <Badge n="9" className="left-[1180px] top-[959px]" />

      <div className="absolute left-[758px] top-[1014px] text-[17px] leading-[20px] font-light text-[#f04040] whitespace-nowrap">去掉</div>
    </div>
  );
}
